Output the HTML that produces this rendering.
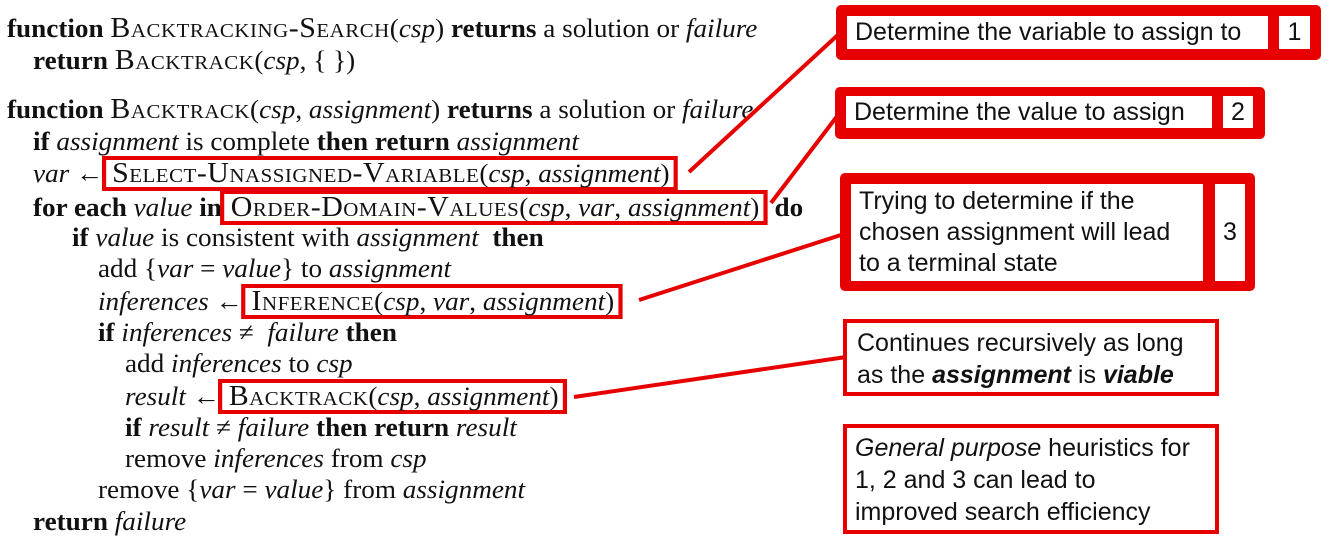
<!DOCTYPE html>
<html><head><meta charset="utf-8"><style>
body{margin:0;width:1330px;height:544px;background:#fff;position:relative;overflow:hidden;font-family:"Liberation Serif",serif;color:#111}
.l{position:absolute;font-size:26px;white-space:nowrap;line-height:30px;transform:scaleX(1.045);transform-origin:left}
.sc{font-variant:small-caps;font-size:1.1em;letter-spacing:0.5px;line-height:20px}
i{font-style:italic}
.bx{display:inline-block;border:4px solid #e60000;padding:0 4px 0 6px;line-height:27px;margin-left:-8px}
.s{position:absolute;font-family:"Liberation Sans",sans-serif;font-size:25px;color:#111;line-height:32px;box-sizing:border-box;white-space:nowrap}
.tb{position:absolute;background:#e60000;border-radius:5px}
.w{position:absolute;background:#fff}
</style></head><body>
<div class="l" style="left:7px;top:14px"><b>function</b> <span class="sc">Backtracking-Search</span>(<i>csp</i>) <b>returns</b> a solution or <i>failure</i></div>
<div class="l" style="left:33px;top:46px"><b>return</b> <span class="sc">Backtrack</span>(<i>csp</i>, { })</div>
<div class="l" style="left:7px;top:95px"><b>function</b> <span class="sc">Backtrack</span>(<i>csp</i>, <i>assignment</i>) <b>returns</b> a solution or <i>failure</i></div>
<div class="l" style="left:33px;top:127px"><b>if</b> <i>assignment</i> is complete <b>then return</b> <i>assignment</i></div>
<div class="l" style="left:33px;top:156px"><i>var</i> ← <span class="bx"><span class="sc">Select-Unassigned-Variable</span>(<i>csp</i>, <i>assignment</i>)</span></div>
<div class="l" style="left:33px;top:190px"><b>for each</b> <i>value</i> <b>in</b> <span class="bx"><span class="sc">Order-Domain-Values</span>(<i>csp</i>, <i>var</i>, <i>assignment</i>)</span> <b>do</b></div>
<div class="l" style="left:72px;top:223px"><b>if</b> <i>value</i> is consistent with <i>assignment</i> &nbsp;<b>then</b></div>
<div class="l" style="left:98px;top:254px">add {<i>var</i> = <i>value</i>} to <i>assignment</i></div>
<div class="l" style="left:98px;top:284px"><i>inferences</i> ← <span class="bx"><span class="sc">Inference</span>(<i>csp</i>, <i>var</i>, <i>assignment</i>)</span></div>
<div class="l" style="left:98px;top:318px"><b>if</b> <i>inferences</i> ≠ &nbsp;<i>failure</i> <b>then</b></div>
<div class="l" style="left:125px;top:349px">add <i>inferences</i> to <i>csp</i></div>
<div class="l" style="left:125px;top:379px"><i>result</i> ← <span class="bx"><span class="sc">Backtrack</span>(<i>csp</i>, <i>assignment</i>)</span></div>
<div class="l" style="left:125px;top:413px"><b>if</b> <i>result</i> ≠ <i>failure</i> <b>then return</b> <i>result</i></div>
<div class="l" style="left:125px;top:444px">remove <i>inferences</i> from <i>csp</i></div>
<div class="l" style="left:98px;top:475px">remove {<i>var</i> = <i>value</i>} from <i>assignment</i></div>
<div class="l" style="left:33px;top:507px"><b>return</b> <i>failure</i></div>

<svg style="position:absolute;left:0;top:0" width="1330" height="544"><g stroke="#e60000" stroke-width="4">
<line x1="689" y1="172" x2="840" y2="33"/>
<line x1="771" y1="203" x2="838" y2="115"/>
<line x1="639" y1="300" x2="844" y2="234"/>
<line x1="574" y1="397" x2="846" y2="357"/>
</g></svg>

<div class="tb" style="left:836px;top:5px;width:485px;height:55px"></div>
<div class="w s" style="left:847px;top:16px;width:421px;height:33px;padding-left:8px;line-height:33px">Determine the variable to assign to</div>
<div class="w s" style="left:1279px;top:16px;width:31px;height:33px;text-align:center;line-height:33px">1</div>

<div class="tb" style="left:835px;top:87px;width:430px;height:52px"></div>
<div class="w s" style="left:846px;top:96px;width:366px;height:32px;padding-left:8px">Determine the value to assign</div>
<div class="w s" style="left:1223px;top:96px;width:30px;height:32px;text-align:center">2</div>

<div class="tb" style="left:840px;top:173px;width:415px;height:118px"></div>
<div class="w s" style="left:851px;top:184px;width:352px;height:97px;padding-left:8px;line-height:31px;padding-top:2px">Trying to determine if the<br>chosen assignment will lead<br>to a terminal state</div>
<div class="w s" style="left:1215px;top:184px;width:30px;height:97px;text-align:center;line-height:97px">3</div>

<div class="s" style="left:843px;top:319px;width:376px;height:77px;border:4px solid #e60000;padding:4px 0 0 10px">Continues recursively as long<br>as the <b><i>assignment</i></b> is <b><i>viable</i></b></div>
<div class="s" style="left:843px;top:424px;width:376px;height:110px;border:4px solid #e60000;padding:4px 0 0 8px">
<i>General purpose</i> heuristics for<br>1, 2 and 3 can lead to<br>improved search efficiency</div>
</body></html>
